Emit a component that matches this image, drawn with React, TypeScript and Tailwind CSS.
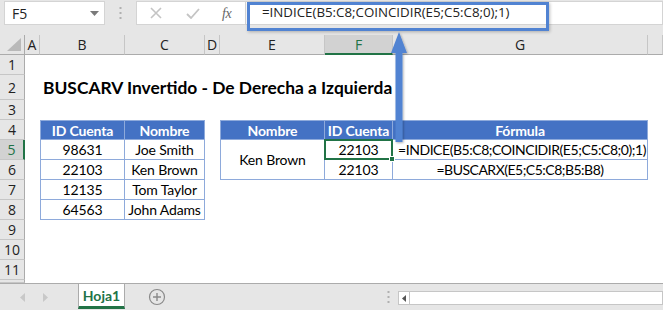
import React from "react";

const cellFont = "font-['Lato','Liberation_Sans',sans-serif]";
const uiFont = "font-['Open_Sans','Noto_Sans',sans-serif]";

const cols = ["A", "B", "C", "D", "E", "F", "G", ""];
const colStart = [
  "col-start-2",
  "col-start-3",
  "col-start-4",
  "col-start-5",
  "col-start-6",
  "col-start-7",
  "col-start-8",
  "col-start-9",
];
const rowStart = [
  "row-start-2",
  "row-start-3",
  "row-start-4",
  "row-start-5",
  "row-start-6",
  "row-start-7",
  "row-start-8",
  "row-start-9",
  "row-start-10",
  "row-start-11",
  "row-start-12",
  "row-start-13",
];

const left = [
  ["98631", "Joe Smith"],
  ["22103", "Ken Brown"],
  ["12135", "Tom Taylor"],
  ["64563", "John Adams"],
];

export default function App() {
  return (
    <div className={`relative w-[663px] h-[310px] overflow-hidden bg-white ${cellFont}`}>
      {/* Formula bar */}
      <div className="h-[35px] bg-[#e6e6e6] flex items-start pt-[1px]">
        <div className={`ml-[4px] w-[101px] h-[24px] bg-white border border-[#d4d4d4] flex items-center justify-between pl-[7px] pr-[5px] text-[14px] text-[#222] ${uiFont}`}>
          <span>F5</span>
          <svg width="9" height="5" viewBox="0 0 9 5">
            <path d="M0 0 L9 0 L4.5 5 Z" fill="#7a7a7a" />
          </svg>
        </div>
        <div className="w-[31px] h-[24px] flex items-center justify-center">
          <svg width="3" height="12" viewBox="0 0 3 12">
            <rect x="0.5" y="0" width="2" height="2" fill="#b0b0b0" />
            <rect x="0.5" y="5" width="2" height="2" fill="#b0b0b0" />
            <rect x="0.5" y="10" width="2" height="2" fill="#b0b0b0" />
          </svg>
        </div>
        <div className="w-[110px] h-[24px] bg-white border border-[#d4d4d4] flex items-center">
          <svg className="ml-[13px]" width="12" height="12" viewBox="0 0 12 12">
            <path d="M1 1 L11 11 M11 1 L1 11" stroke="#c4c4c4" strokeWidth="1.6" />
          </svg>
          <svg className="ml-[24px]" width="14" height="11" viewBox="0 0 14 11">
            <path d="M1 6 L5 10 L13 1" stroke="#c4c4c4" strokeWidth="1.8" fill="none" />
          </svg>
          <span className="ml-[22px] font-['Liberation_Serif',serif] italic text-[14px] text-[#666] tracking-[-0.5px]">
            fx
          </span>
        </div>
        <div className={`flex-1 h-[24px] bg-white border border-l-0 border-[#d4d4d4] flex items-center pl-[16px] text-[13.3px] text-[#222] whitespace-nowrap ${uiFont}`}>
          =INDICE(B5:C8;COINCIDIR(E5;C5:C8;0);1)
        </div>
      </div>

      {/* Grid */}
      <div className="grid grid-cols-[25px_15px_85px_80px_15px_105px_68px_255px_1fr] grid-rows-[20px_20px_25px_20px_20px_20px_20px_20px_20px_20px_20px_20px_3px] h-[248px] overflow-hidden text-[14px] tracking-[-0.15px] text-black">
        {/* corner */}
        <div className="col-start-1 row-start-1 bg-[#e6e6e6] border-r border-b border-[#ababab] flex items-end justify-end pr-[3px] pb-[3px]">
          <svg width="14" height="13" viewBox="0 0 14 13">
            <path d="M14 0 L14 13 L0 13 Z" fill="#b9b9b9" />
          </svg>
        </div>
        {/* column headers */}
        {cols.map((c, i) => {
          const sel = c === "F";
          return (
            <div
              key={"h" + i}
              className={`${colStart[i]} row-start-1 flex items-center justify-center text-[14px] tracking-normal ${uiFont} ${
                sel
                  ? "bg-[#d2d2d2] text-[#217346] border-b-2 border-b-[#217346] border-r border-r-[#c6c6c6]"
                  : "bg-[#e6e6e6] text-[#222] border-b border-b-[#ababab] border-r border-r-[#c6c6c6]"
              }`}
            >
              {c}
            </div>
          );
        })}
        {/* row headers */}
        {rowStart.map((r, i) => {
          const sel = i === 4;
          return (
            <div
              key={"r" + i}
              className={`col-start-1 ${r} flex items-center justify-center overflow-hidden text-[14px] tracking-normal ${uiFont} ${
                sel
                  ? "bg-[#d2d2d2] text-[#217346] border-r-2 border-r-[#217346] border-b border-b-[#c6c6c6]"
                  : "bg-[#e6e6e6] text-[#222] border-r border-r-[#ababab] border-b border-b-[#c6c6c6]"
              }`}
            >
              {i < 11 ? i + 1 : ""}
            </div>
          );
        })}

        {/* Title */}
        <div className="col-start-3 col-span-6 row-start-3 flex items-center pl-[3px] pt-[2px] font-bold text-[17.4px] tracking-normal whitespace-nowrap">
          BUSCARV Invertido - De Derecha a Izquierda
        </div>

        {/* Left table */}
        <div className="col-start-3 row-start-5 bg-[#4472c4] text-white font-bold flex items-center justify-center border border-[#8eaadb]">
          ID Cuenta
        </div>
        <div className="col-start-4 row-start-5 bg-[#4472c4] text-white font-bold flex items-center justify-center border border-l-0 border-[#8eaadb]">
          Nombre
        </div>
        {left.map((row, i) => (
          <React.Fragment key={"l" + i}>
            <div className={`col-start-3 ${rowStart[4 + i]} flex items-center justify-center border border-t-0 border-[#8eaadb]`}>
              {row[0]}
            </div>
            <div className={`col-start-4 ${rowStart[4 + i]} flex items-center justify-center border border-t-0 border-l-0 border-[#8eaadb] whitespace-nowrap`}>
              {row[1]}
            </div>
          </React.Fragment>
        ))}

        {/* Right table */}
        <div className="col-start-6 row-start-5 bg-[#4472c4] text-white font-bold flex items-center justify-center border border-[#8eaadb]">
          Nombre
        </div>
        <div className="col-start-7 row-start-5 bg-[#4472c4] text-white font-bold flex items-center justify-center border border-l-0 border-[#8eaadb] whitespace-nowrap">
          ID Cuenta
        </div>
        <div className="col-start-8 row-start-5 bg-[#4472c4] text-white font-bold flex items-center justify-center border border-l-0 border-[#8eaadb]">
          Fórmula
        </div>
        <div className="col-start-6 row-start-6 row-span-2 flex items-center justify-center border border-t-0 border-[#8eaadb]">
          Ken Brown
        </div>
        <div className="relative col-start-7 row-start-6 flex items-center justify-center border-r border-b border-[#8eaadb]">
          22103
          <div className="absolute -left-[1px] -top-[1px] -right-[1px] -bottom-[1px] border-2 border-[#217346]" />
          <div className="absolute -right-[3px] -bottom-[3px] w-[6px] h-[6px] bg-[#217346] border border-white" />
        </div>
        <div className="col-start-8 row-start-6 flex items-center justify-center pl-[4px] border-r border-b border-[#8eaadb] whitespace-nowrap tracking-[-0.45px]">
          =INDICE(B5:C8;COINCIDIR(E5;C5:C8;0);1)
        </div>
        <div className="col-start-7 row-start-7 flex items-center justify-center border-r border-b border-[#8eaadb]">
          22103
        </div>
        <div className="col-start-8 row-start-7 flex items-center justify-center border-r border-b border-[#8eaadb] whitespace-nowrap tracking-[-0.5px]">
          =BUSCARX(E5;C5:C8;B5:B8)
        </div>
      </div>

      {/* Sheet tab bar */}
      <div className="h-[27px] bg-[#e6e6e6] border-t border-[#ababab] flex items-start">
        <div className="w-[78px] h-[26px] flex items-center">
          <svg className="ml-[20px]" width="5" height="9" viewBox="0 0 5 9">
            <path d="M5 0 L0 4.5 L5 9 Z" fill="#c8c8c8" />
          </svg>
          <svg className="ml-[18px]" width="5" height="9" viewBox="0 0 5 9">
            <path d="M0 0 L5 4.5 L0 9 Z" fill="#c8c8c8" />
          </svg>
        </div>
        <div className="w-[47px] h-[25px] bg-white border-x border-[#ababab] border-b-[3px] border-b-[#217346] flex items-center justify-center font-bold text-[14px] text-[#217346]">
          Hoja1
        </div>
        <div className="w-[64px] h-[26px] flex items-center justify-center">
          <svg width="18" height="18" viewBox="0 0 18 18">
            <circle cx="9" cy="9" r="7.5" fill="none" stroke="#8a8a8a" strokeWidth="1.2" />
            <path d="M9 5 V13 M5 9 H13" stroke="#8a8a8a" strokeWidth="1.4" />
          </svg>
        </div>
        <div className="flex-1" />
        <div className="w-[20px] h-[26px] flex items-center justify-center">
          <svg width="3" height="12" viewBox="0 0 3 12">
            <rect x="0.5" y="0" width="2" height="2" fill="#b0b0b0" />
            <rect x="0.5" y="5" width="2" height="2" fill="#b0b0b0" />
            <rect x="0.5" y="10" width="2" height="2" fill="#b0b0b0" />
          </svg>
        </div>
        <div className="mt-[7px] w-[265px] h-[14px] bg-white border border-[#c6c6c6] flex">
          <div className="w-[11px] h-full border-r border-[#c6c6c6] flex items-center justify-center">
            <svg width="4" height="7" viewBox="0 0 4 7">
              <path d="M4 0 L0 3.5 L4 7 Z" fill="#555" />
            </svg>
          </div>
        </div>
      </div>

      {/* Overlays: highlight box and arrow */}
      <div className="absolute left-[247px] top-[2px] w-[302px] h-[29px] border-[3px] border-[#5183d2] shadow-[1px_1px_3px_rgba(0,0,0,0.25)]" />
      <svg className="absolute left-[388px] top-[30px]" width="22" height="116" viewBox="0 0 22 116">
        <defs>
          <filter id="sh" x="-50%" y="-10%" width="200%" height="130%">
            <feDropShadow dx="1" dy="1" stdDeviation="1" floodColor="#000" floodOpacity="0.3" />
          </filter>
        </defs>
        <path d="M11 2 L19 23 L14.5 23 L14.5 112 L7.5 112 L7.5 23 L3 23 Z" fill="#5183d2" filter="url(#sh)" />
      </svg>
    </div>
  );
}
